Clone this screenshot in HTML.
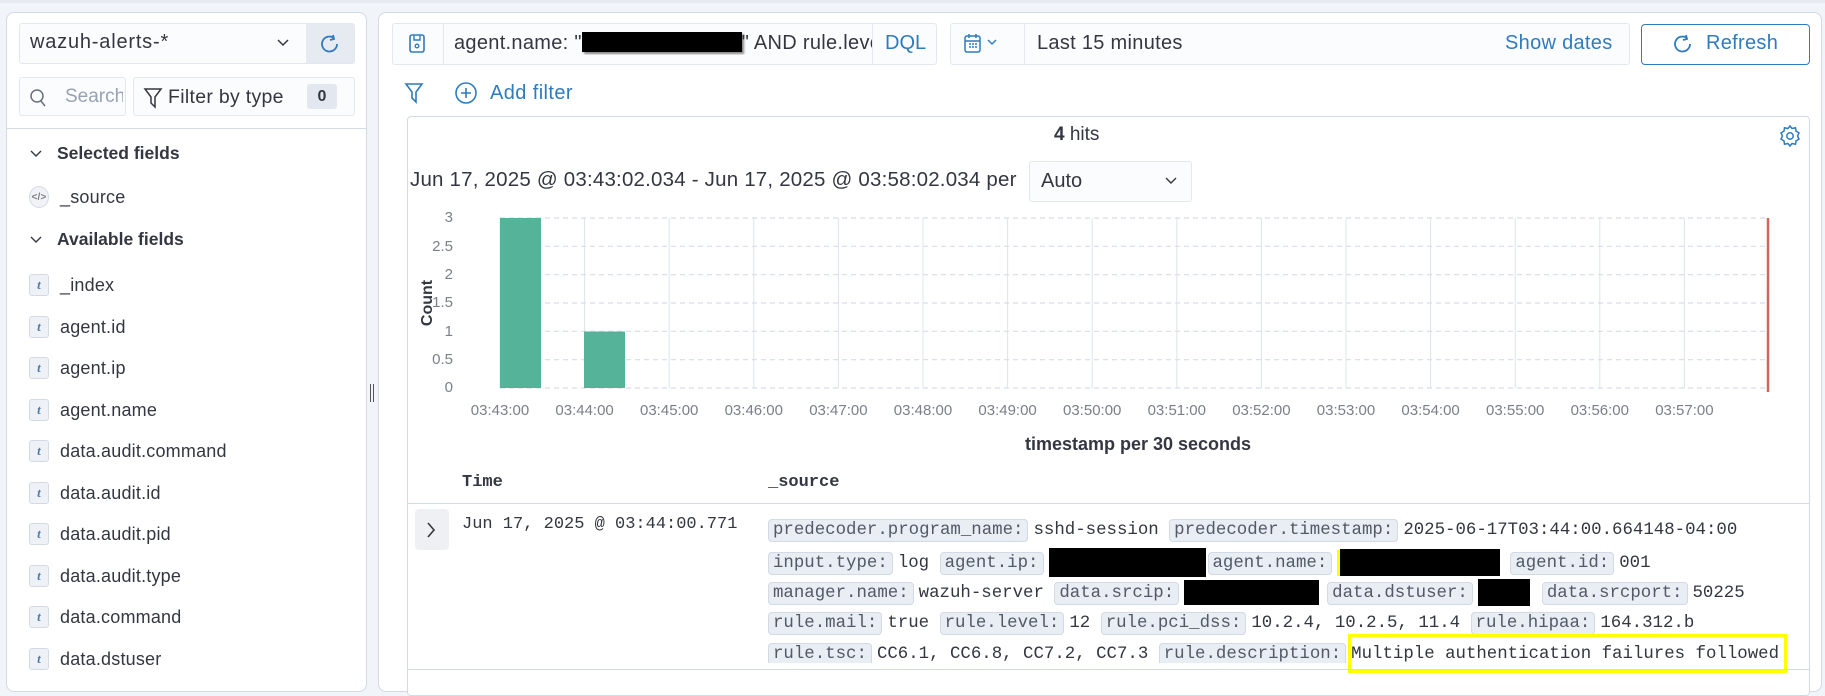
<!DOCTYPE html>
<html><head><meta charset="utf-8"><style>
*{box-sizing:border-box;margin:0;padding:0}
body{width:1825px;height:678px;overflow:hidden;background:#f1f4f8;font-family:"Liberation Sans",sans-serif;color:#343741;position:relative}
.a{position:absolute}
.panel{background:#fff;border:1px solid #d3dae6;border-radius:8px}
.fld{position:absolute;left:29px;font-size:18px;color:#343741;display:flex;align-items:center;letter-spacing:0.2px}
.fld .t{width:20px;height:22px;border:1px solid #d3dae6;background:#eef2f7;border-radius:3px;color:#4a7bb0;font-style:italic;font-weight:bold;font-size:13px;display:flex;align-items:center;justify-content:center;margin-right:11px;font-family:"Liberation Serif",serif}
.mono{font-family:"Liberation Mono",monospace;font-size:17.4px;color:#343741}
.src div{height:31px;line-height:27px;white-space:nowrap}
.b{background:#e9eef5;border:1px solid #d3dae6;border-radius:4px;padding:1px 4px;margin-right:5px;color:#535966}
.rd{display:inline-block;background:#000;vertical-align:middle}
.xl{font-size:15px;fill:#7a7f89;font-family:"Liberation Sans",sans-serif}
</style></head><body>
<div class="a" style="left:0;top:0;width:1825px;height:3px;background:#e6ebf2"></div>

<!-- left panel -->
<div class="a panel" style="left:6px;top:12px;width:361px;height:680px"></div>
<div class="a" style="left:19px;top:23px;width:336px;height:41px;background:#fbfcfd;border:1px solid #e3e8f0;border-radius:3px"></div>
<div class="a" style="left:30px;top:31px;font-size:20px;letter-spacing:0.8px;color:#343741">wazuh-alerts-*</div>
<svg class="a" style="left:276px;top:38px" width="14" height="10"><path d="M2 2 L7 7 L12 2" stroke="#343741" stroke-width="1.5" fill="none"/></svg>
<div class="a" style="left:306px;top:24px;width:48px;height:39px;background:#e6ebf2"></div>
<svg class="a" style="left:319px;top:33px" width="22" height="22" viewBox="0 0 22 22"><path d="M15 5 A7.5 7.5 0 1 0 18 11" stroke="#2f7bbd" stroke-width="1.8" fill="none"/><path d="M14 2 L15 6 L11 7" stroke="#2f7bbd" stroke-width="1.8" fill="none"/></svg>
<div class="a" style="left:19px;top:77px;width:107px;height:39px;background:#fbfcfd;border:1px solid #e3e8f0;border-radius:3px"></div>
<svg class="a" style="left:29px;top:88px" width="18" height="20"><circle cx="8" cy="8" r="6" stroke="#69707d" stroke-width="1.5" fill="none"/><path d="M12 13 L16 18" stroke="#69707d" stroke-width="1.5"/></svg>
<div class="a" style="left:65px;top:86px;font-size:19px;color:#98a2b3;width:58px;overflow:hidden;white-space:nowrap">Search</div>
<div class="a" style="left:133px;top:77px;width:222px;height:39px;background:#fbfcfd;border:1px solid #e3e8f0;border-radius:3px"></div>
<svg class="a" style="left:143px;top:87px" width="20" height="22"><path d="M2 2 H18 L12 10 V20 L8 16 V10 Z" stroke="#343741" stroke-width="1.5" fill="none"/></svg>
<div class="a" style="left:168px;top:86px;font-size:19.5px;letter-spacing:0.3px">Filter by type</div>
<div class="a" style="left:307px;top:84px;width:30px;height:25px;background:#e3e8f0;border-radius:3px;font-size:16px;font-weight:bold;text-align:center;line-height:25px">0</div>
<div class="a" style="left:7px;top:128px;width:359px;height:1px;background:#d3dae6"></div>
<svg class="a" style="left:29px;top:149px" width="14" height="10"><path d="M2 2 L7 7 L12 2" stroke="#343741" stroke-width="1.4" fill="none"/></svg>
<div class="a" style="left:57px;top:143px;font-size:17.5px;font-weight:bold">Selected fields</div>
<div class="fld" style="top:186px"><span class="t" style="border-radius:50%;font-style:normal;font-size:10px;color:#7a808a;font-family:'Liberation Sans';background:#f0f2f5">&lt;/&gt;</span>_source</div>
<svg class="a" style="left:29px;top:235px" width="14" height="10"><path d="M2 2 L7 7 L12 2" stroke="#343741" stroke-width="1.4" fill="none"/></svg>
<div class="a" style="left:57px;top:229px;font-size:17.5px;font-weight:bold">Available fields</div>
<div class="fld" style="top:274px"><span class="t">t</span>_index</div>
<div class="fld" style="top:316px"><span class="t">t</span>agent.id</div>
<div class="fld" style="top:357px"><span class="t">t</span>agent.ip</div>
<div class="fld" style="top:399px"><span class="t">t</span>agent.name</div>
<div class="fld" style="top:440px"><span class="t">t</span>data.audit.command</div>
<div class="fld" style="top:482px"><span class="t">t</span>data.audit.id</div>
<div class="fld" style="top:523px"><span class="t">t</span>data.audit.pid</div>
<div class="fld" style="top:565px"><span class="t">t</span>data.audit.type</div>
<div class="fld" style="top:606px"><span class="t">t</span>data.command</div>
<div class="fld" style="top:648px"><span class="t">t</span>data.dstuser</div>
<div class="a" style="left:370px;top:384px;width:1px;height:18px;background:#555"></div>
<div class="a" style="left:373px;top:384px;width:1px;height:18px;background:#555"></div>

<!-- right panel -->
<div class="a panel" style="left:378px;top:12px;width:1444px;height:680px"></div>
<div class="a" style="left:392px;top:23px;width:545px;height:42px;background:#fbfcfd;border:1px solid #e3e8f0;border-radius:3px"></div>
<div class="a" style="left:443px;top:24px;width:1px;height:40px;background:#e3e8f0"></div>
<svg class="a" style="left:406px;top:32px" width="22" height="24"><rect x="4" y="3" width="14" height="17" rx="2" stroke="#2f7bbd" stroke-width="1.6" fill="none"/><path d="M8 3 V8 H14 V3" stroke="#2f7bbd" stroke-width="1.4" fill="none"/><circle cx="11" cy="14" r="1.8" stroke="#2f7bbd" stroke-width="1.3" fill="none"/></svg>
<div class="a" style="left:454px;top:32px;font-size:20px;letter-spacing:0.3px;white-space:nowrap;width:418px;overflow:hidden">agent.name: "<span style="display:inline-block;width:160px;height:20px;background:#000;vertical-align:-3px;box-shadow:2px 2px 2px #888"></span>" AND rule.level</div>
<div class="a" style="left:872px;top:24px;width:1px;height:40px;background:#e3e8f0"></div>
<div class="a" style="left:885px;top:32px;font-size:20px;color:#2f7bbd">DQL</div>
<div class="a" style="left:950px;top:23px;width:680px;height:42px;background:#fbfcfd;border:1px solid #e3e8f0;border-radius:3px"></div>
<div class="a" style="left:1024px;top:24px;width:1px;height:40px;background:#e3e8f0"></div>
<svg class="a" style="left:963px;top:33px" width="44" height="22"><rect x="2" y="3" width="15" height="16" rx="2" stroke="#2f7bbd" stroke-width="1.5" fill="none"/><path d="M2 8 H17 M6 1 V5 M13 1 V5" stroke="#2f7bbd" stroke-width="1.5"/><path d="M6 11h2M9 11h2M12 11h2M6 14h2M9 14h2M12 14h2" stroke="#2f7bbd" stroke-width="1.5"/><path d="M25 7 L29 11 L33 7" stroke="#2f7bbd" stroke-width="1.4" fill="none"/></svg>
<div class="a" style="left:1037px;top:32px;font-size:20px;letter-spacing:0.3px">Last 15 minutes</div>
<div class="a" style="left:1505px;top:32px;font-size:20px;letter-spacing:0.3px;color:#2f7bbd">Show dates</div>
<div class="a" style="left:1641px;top:24px;width:169px;height:41px;border:1.5px solid #2f7bbd;border-radius:4px;background:#fff"></div>
<svg class="a" style="left:1672px;top:33px" width="22" height="22" viewBox="0 0 22 22"><path d="M15 5 A7.5 7.5 0 1 0 18 11" stroke="#2f7bbd" stroke-width="1.8" fill="none"/><path d="M14 2 L15 6 L11 7" stroke="#2f7bbd" stroke-width="1.8" fill="none"/></svg>
<div class="a" style="left:1706px;top:32px;font-size:20px;letter-spacing:0.3px;color:#2f7bbd">Refresh</div>
<svg class="a" style="left:404px;top:82px" width="20" height="22"><path d="M2 2 H18 L12 10 V20 L8 16 V10 Z" stroke="#2f7bbd" stroke-width="1.6" fill="none"/></svg>
<svg class="a" style="left:454px;top:81px" width="24" height="24"><circle cx="12" cy="12" r="10" stroke="#2f7bbd" stroke-width="1.6" fill="none"/><path d="M12 7 V17 M7 12 H17" stroke="#2f7bbd" stroke-width="1.6"/></svg>
<div class="a" style="left:490px;top:82px;font-size:20px;letter-spacing:0.4px;color:#2f7bbd">Add filter</div>

<div class="a" style="left:407px;top:116px;width:1403px;height:580px;background:#fff;border:1px solid #d3dae6;border-radius:4px"></div>
<div class="a" style="left:1054px;top:124px;font-size:19px"><b>4</b> hits</div>
<svg class="a" style="left:1778px;top:124px" width="24" height="24" viewBox="0 0 24 24"><path d="M12 2 L14 4.5 L17.5 3.8 L18 7 L21 9 L19.5 12 L21 15 L18 17 L17.5 20.2 L14 19.5 L12 22 L10 19.5 L6.5 20.2 L6 17 L3 15 L4.5 12 L3 9 L6 7 L6.5 3.8 L10 4.5 Z" stroke="#2f7bbd" stroke-width="1.5" fill="none"/><circle cx="12" cy="12" r="3.2" stroke="#2f7bbd" stroke-width="1.5" fill="none"/></svg>
<div class="a" style="left:410px;top:168px;font-size:20.5px;letter-spacing:0.2px;white-space:nowrap">Jun 17, 2025 @ 03:43:02.034 - Jun 17, 2025 @ 03:58:02.034 per</div>
<div class="a" style="left:1029px;top:161px;width:163px;height:41px;background:#fbfcfd;border:1px solid #e3e8f0;border-radius:3px"></div>
<div class="a" style="left:1041px;top:170px;font-size:20px">Auto</div>
<svg class="a" style="left:1164px;top:176px" width="14" height="10"><path d="M2 2 L7 7 L12 2" stroke="#343741" stroke-width="1.4" fill="none"/></svg>

<svg class="a" style="left:0;top:0" width="1825" height="678">
<g stroke="#dde3ec" stroke-width="1">
<line x1="500" y1="218" x2="500" y2="388"/><line x1="584.6" y1="218" x2="584.6" y2="388"/><line x1="669.2" y1="218" x2="669.2" y2="388"/><line x1="753.8" y1="218" x2="753.8" y2="388"/><line x1="838.4" y1="218" x2="838.4" y2="388"/><line x1="923" y1="218" x2="923" y2="388"/><line x1="1007.6" y1="218" x2="1007.6" y2="388"/><line x1="1092.2" y1="218" x2="1092.2" y2="388"/><line x1="1176.8" y1="218" x2="1176.8" y2="388"/><line x1="1261.4" y1="218" x2="1261.4" y2="388"/><line x1="1346" y1="218" x2="1346" y2="388"/><line x1="1430.6" y1="218" x2="1430.6" y2="388"/><line x1="1515.2" y1="218" x2="1515.2" y2="388"/><line x1="1599.8" y1="218" x2="1599.8" y2="388"/><line x1="1684.4" y1="218" x2="1684.4" y2="388"/>
</g>
<g stroke="#d8dee8" stroke-width="1.2" stroke-dasharray="5,4">
<line x1="500" y1="218" x2="1768" y2="218"/><line x1="500" y1="246.3" x2="1768" y2="246.3"/><line x1="500" y1="274.7" x2="1768" y2="274.7"/><line x1="500" y1="303" x2="1768" y2="303"/><line x1="500" y1="331.3" x2="1768" y2="331.3"/><line x1="500" y1="359.7" x2="1768" y2="359.7"/><line x1="500" y1="388" x2="1768" y2="388"/>
</g>
<rect x="500" y="218" width="41" height="170" fill="#54b399"/>
<rect x="584" y="331.5" width="41" height="56.5" fill="#54b399"/>
<line x1="1768" y1="218" x2="1768" y2="392" stroke="#d0665d" stroke-width="2.5"/>
<g class="xl" text-anchor="end"><text x="453" y="222">3</text><text x="453" y="251">2.5</text><text x="453" y="279">2</text><text x="453" y="307">1.5</text><text x="453" y="336">1</text><text x="453" y="364">0.5</text><text x="453" y="392">0</text></g>
<g class="xl" text-anchor="middle"><text x="500" y="415">03:43:00</text><text x="584.6" y="415">03:44:00</text><text x="669.2" y="415">03:45:00</text><text x="753.8" y="415">03:46:00</text><text x="838.4" y="415">03:47:00</text><text x="923" y="415">03:48:00</text><text x="1007.6" y="415">03:49:00</text><text x="1092.2" y="415">03:50:00</text><text x="1176.8" y="415">03:51:00</text><text x="1261.4" y="415">03:52:00</text><text x="1346" y="415">03:53:00</text><text x="1430.6" y="415">03:54:00</text><text x="1515.2" y="415">03:55:00</text><text x="1599.8" y="415">03:56:00</text><text x="1684.4" y="415">03:57:00</text></g>
<text x="1138" y="450" text-anchor="middle" font-family="Liberation Sans" font-weight="bold" font-size="18" fill="#343741">timestamp per 30 seconds</text>
<text transform="translate(432,303) rotate(-90)" text-anchor="middle" font-family="Liberation Sans" font-weight="bold" font-size="16" fill="#343741">Count</text>
</svg>

<div class="a mono" style="left:462px;top:473px;font-weight:bold;font-size:17px">Time</div>
<div class="a mono" style="left:768px;top:473px;font-weight:bold;font-size:17px">_source</div>
<div class="a" style="left:408px;top:503px;width:1401px;height:1px;background:#d3dae6"></div>
<div class="a" style="left:415px;top:509px;width:34px;height:41px;background:#eef0f3;border-radius:4px"></div>
<svg class="a" style="left:424px;top:520px" width="14" height="20"><path d="M4 3 L10 10 L4 17" stroke="#343741" stroke-width="1.6" fill="none"/></svg>
<div class="a mono" style="left:462px;top:515px;font-size:17px">Jun 17, 2025 @ 03:44:00.771</div>

<div class="a mono src" style="left:768px;top:517px;width:1016px;height:146px;overflow:hidden">
<div><span class="b">predecoder.program_name:</span>sshd-session <span class="b">predecoder.timestamp:</span>2025-06-17T03:44:00.664148-04:00</div>
<div><span class="b">input.type:</span>log <span class="b">agent.ip:</span><span class="rd" style="width:157px;height:29px;margin-right:2px"></span><span class="b">agent.name:</span><span class="rd" style="width:3px;height:26px;background:#ff0"></span><span class="rd" style="width:160px;height:27px;margin-right:10px"></span><span class="b">agent.id:</span>001</div>
<div><span class="b">manager.name:</span>wazuh-server <span class="b">data.srcip:</span><span class="rd" style="width:135px;height:25px;margin-right:8px"></span><span class="b">data.dstuser:</span><span class="rd" style="width:52px;height:27px;margin-right:12px"></span><span class="b">data.srcport:</span>50225</div>
<div><span class="b">rule.mail:</span>true <span class="b">rule.level:</span>12 <span class="b">rule.pci_dss:</span>10.2.4, 10.2.5, 11.4 <span class="b">rule.hipaa:</span>164.312.b</div>
<div><span class="b">rule.tsc:</span>CC6.1, CC6.8, CC7.2, CC7.3 <span class="b">rule.description:</span>Multiple authentication failures followed by</div>
</div>
<div class="a" style="left:1348px;top:634px;width:439px;height:39px;border:3px solid #ffff00"></div>
<div class="a" style="left:408px;top:669px;width:1401px;height:1px;background:#d3dae6"></div>
</body></html>
